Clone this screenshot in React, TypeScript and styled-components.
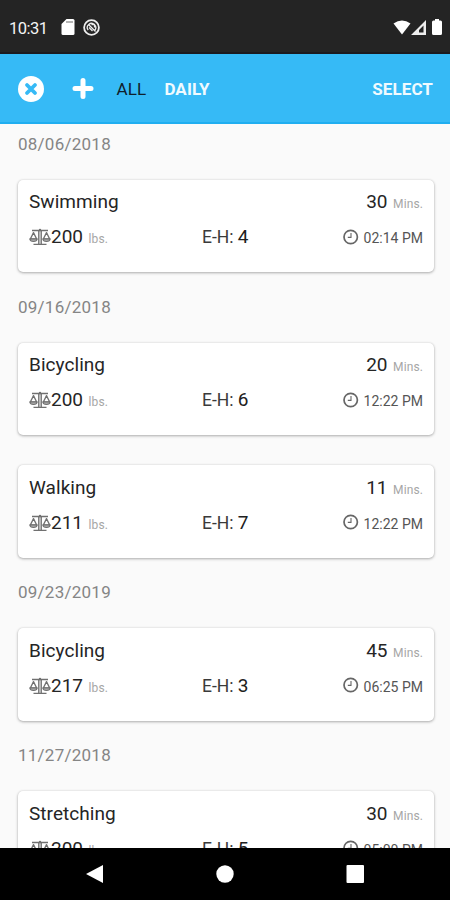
import React from 'react';
import styled, { createGlobalStyle } from 'styled-components';

const GlobalStyle = createGlobalStyle`
  * { box-sizing: border-box; }
  body { margin: 0; background: #fafafa; font-family: Roboto, "Liberation Sans", sans-serif; }
`;

const Screen = styled.div`
  width: 450px;
  height: 900px;
  display: flex;
  flex-direction: column;
  overflow: hidden;
  background: #fafafa;
`;

const StatusBar = styled.header`
  flex: none;
  height: 54px;
  padding: 3px 8px 0 9px;
  display: flex;
  align-items: center;
  background: #242424;
  border-bottom: 2px solid #1b1a1f;
  color: #f4f4f4;
`;

const Clock = styled.span`
  width: 51px;
  padding-top: 1px;
  font-size: 16.5px;
  letter-spacing: -0.5px;
`;

const StatusIcon = styled.svg<{ $gap?: number }>`
  display: block;
  flex: none;
  margin-left: ${({ $gap = 0 }) => $gap}px;
  margin-bottom: 1px;
`;

const StatusRight = styled.div`
  margin-left: auto;
  display: flex;
  align-items: center;
`;

const Toolbar = styled.nav`
  flex: none;
  height: 70px;
  padding: 1px 17px 0 18px;
  display: flex;
  align-items: center;
  background: #36baf6;
  border-bottom: 2px solid #20aef0;
  color: #fff;
`;

const IconButton = styled.button<{ $gap?: number }>`
  margin: 0 0 0 ${({ $gap = 0 }) => $gap}px;
  padding: 0;
  border: 0;
  background: none;
  line-height: 0;
`;

const TextButton = styled.button<{ $active?: boolean; $gap?: number; $push?: boolean }>`
  margin: 0 0 0 ${({ $gap = 0, $push }) => ($push ? 'auto' : `${$gap}px`)};
  padding: 1px 0 0;
  border: 0;
  background: none;
  font: ${({ $active }) => ($active ? 400 : 700)} 17px Roboto, "Liberation Sans", sans-serif;
  letter-spacing: 0.1px;
  color: ${({ $active }) => ($active ? '#10202b' : '#f0faff')};
`;

const List = styled.main`
  flex: 1;
  min-height: 0;
  overflow: hidden;
  padding: 0 16px 0 18px;
`;

const Group = styled.section`
  display: flex;
  flex-direction: column;
  gap: 30px;
`;

const DateLabel = styled.h2`
  margin: 0;
  height: 40.6px;
  padding-top: 9.6px;
  font-size: 17px;
  font-weight: 400;
  line-height: 20px;
  letter-spacing: 0.25px;
  color: #858585;

  ${Group} > & { margin-bottom: -15px; }
  ${Group}:first-child > & { margin-bottom: -14.6px; }
  ${Group} + ${Group} > & { margin-top: 15px; }
`;

const Card = styled.article`
  height: 92.4px;
  padding: 10.2px 11px 0;
  border-radius: 5px;
  background: #fff;
  box-shadow: 0 1px 3px rgba(0, 0, 0, 0.3), 0 0 2px rgba(0, 0, 0, 0.1);
  color: #252525;
`;

const TitleRow = styled.div`
  display: flex;
  justify-content: space-between;
  align-items: baseline;
  font-size: 19px;
  line-height: 24px;
  letter-spacing: 0.05px;
`;

const DetailRow = styled.div`
  display: grid;
  grid-template-columns: 173px 1fr auto;
  align-items: baseline;
  margin-top: 9px;
  font-size: 19px;
  line-height: 24px;
`;

const Unit = styled.small`
  margin-left: 5.5px;
  font-size: 12px;
  letter-spacing: 0.1px;
  color: #a6a6a6;
`;

const Weight = styled.span`
  display: flex;
  align-items: baseline;
`;

const Effort = styled.span`
  font-size: 17.5px;
  color: #3a3a3a;
  b { font-size: 19px; font-weight: 400; color: #202020; }
`;

const Time = styled.span`
  display: flex;
  align-items: baseline;
  gap: 5px;
  font-size: 14px;
  color: #555;
`;

const Glyph = styled.svg<{ $drop: number }>`
  display: block;
  flex: none;
  align-self: flex-start;
  margin-top: ${({ $drop }) => $drop}px;
`;

const NavBar = styled.footer`
  flex: none;
  height: 52px;
  padding: 0 86px;
  display: flex;
  justify-content: space-between;
  align-items: center;
  background: #000;
`;

const Scale = () => (
  <Glyph $drop={3} width="22" height="18" viewBox="0 0 22 18" fill="none" stroke="#707070" strokeWidth="1.4">
    <path d="M3 2.5h16M9.8 3v13M12.2 3v13M4.5 16.4h13" />
    <circle cx="11" cy="2" r="1.2" fill="#707070" stroke="none" />
    <path d="M4.5 4.6L1.3 11h6.4zM17.5 4.6L14.3 11h6.4z" strokeLinejoin="round" strokeWidth="1.3" />
    <path d="M.8 11c.5 3.300 6.900 3.300 7.400 0zM13.800 11c.5 3.300 6.900 3.300 7.400 0z" fill="#aaa" strokeWidth="1.100" />
  </Glyph>
);

const ClockIcon = () => (
  <Glyph $drop={2.5} width="16" height="16" viewBox="0 0 16 16" fill="none" stroke="#666">
    <circle cx="7.7" cy="8" r="6.7" strokeWidth="1.7" />
    <path d="M8 4v4.4H4.8" strokeWidth="1.1" />
  </Glyph>
);

interface Entry { name: string; mins: number; weight: number; effort: number; time: string }

const groups: { date: string; entries: Entry[] }[] = [
  { date: '08/06/2018', entries: [{ name: 'Swimming', mins: 30, weight: 200, effort: 4, time: '02:14 PM' }] },
  {
    date: '09/16/2018',
    entries: [
      { name: 'Bicycling', mins: 20, weight: 200, effort: 6, time: '12:22 PM' },
      { name: 'Walking', mins: 11, weight: 211, effort: 7, time: '12:22 PM' },
    ],
  },
  { date: '09/23/2019', entries: [{ name: 'Bicycling', mins: 45, weight: 217, effort: 3, time: '06:25 PM' }] },
  { date: '11/27/2018', entries: [{ name: 'Stretching', mins: 30, weight: 200, effort: 5, time: '05:00 PM' }] },
];

const ActivityCard = ({ name, mins, weight, effort, time }: Entry) => (
  <Card>
    <TitleRow>
      <span>{name}</span>
      <span>{mins}<Unit>Mins.</Unit></span>
    </TitleRow>
    <DetailRow>
      <Weight><Scale />{weight}<Unit>lbs.</Unit></Weight>
      <Effort>E-H: <b>{effort}</b></Effort>
      <Time><ClockIcon /><span>{time}</span></Time>
    </DetailRow>
  </Card>
);

export default function App() {
  return (
    <>
      <GlobalStyle />
      <Screen>
        <StatusBar>
          <Clock>10:31</Clock>
          <StatusIcon $gap={1} width="14" height="16" viewBox="0 0 14 16">
            <path d="M5.5 0H12q1.5 0 1.5 1.5v13Q13.500 16 12 16H2Q.5 16 .5 14.500V5z" fill="#fff" />
            <path d="M5 3h7" stroke="#b5b5b5" strokeWidth="2" />
          </StatusIcon>
          <StatusIcon $gap={8} width="17" height="17" viewBox="0 0 17 17" fill="none" stroke="#eee">
            <circle cx="8.500" cy="8.500" r="7.400" strokeWidth="1.800" />
            <path d="M11.800 11.300A4.200 4.200 0 1 0 5.200 11.200M5.500 5.500l7 7M6 8.500l3.500 3.500M8.500 5.500h3v3" strokeWidth="1.300" />
          </StatusIcon>
          <StatusRight>
            <StatusIcon width="18" height="15" viewBox="0 0 18 15">
              <path d="M.5 3.500Q9-2.500 17.500 3.500L9 14.500z" fill="#fff" />
            </StatusIcon>
            <StatusIcon width="15" height="15" viewBox="0 0 15 15">
              <path fillRule="evenodd" d="M0 15L15 0v15zM8 12.500h4.500V5.500L8 10z" fill="#eee" />
            </StatusIcon>
            <StatusIcon $gap={6} width="10" height="16" viewBox="0 0 10 16">
              <path d="M3 0h4v1.500h1.500Q10 1.500 10 3v11.500Q10 16 8.500 16h-7Q0 16 0 14.500V3Q0 1.500 1.500 1.500H3z" fill="#fff" />
            </StatusIcon>
          </StatusRight>
        </StatusBar>
        <Toolbar>
          <IconButton aria-label="Close">
            <svg width="26" height="26" viewBox="0 0 26 26">
              <circle cx="13" cy="13" r="13" fill="#fff" />
              <path d="M9 9l8 8M17 9l-8 8" stroke="#36baf6" strokeWidth="3.8" strokeLinecap="round" />
            </svg>
          </IconButton>
          <IconButton $gap={28} aria-label="Add">
            <svg width="22" height="22" viewBox="0 0 22 22">
              <path d="M11 2.500v16M3 10.500h16" stroke="#fff" strokeWidth="5" strokeLinecap="round" />
            </svg>
          </IconButton>
          <TextButton $active $gap={22.5}>ALL</TextButton>
          <TextButton $gap={18.2}>DAILY</TextButton>
          <TextButton $push>SELECT</TextButton>
        </Toolbar>
        <List>
          {groups.map(({ date, entries }) => (
            <Group key={date}>
              <DateLabel>{date}</DateLabel>
              {entries.map((entry) => <ActivityCard key={entry.name} {...entry} />)}
            </Group>
          ))}
        </List>
        <NavBar>
          <svg width="17" height="18" viewBox="0 0 17 18"><path d="M0 9L17 0v18z" fill="#fff" /></svg>
          <svg width="18" height="18" viewBox="0 0 18 18"><circle cx="9" cy="9" r="8.700" fill="#fff" /></svg>
          <svg width="18" height="18" viewBox="0 0 18 18"><rect x=".5" width="17.5" height="18" rx="1" fill="#fff" /></svg>
        </NavBar>
      </Screen>
    </>
  );
}
